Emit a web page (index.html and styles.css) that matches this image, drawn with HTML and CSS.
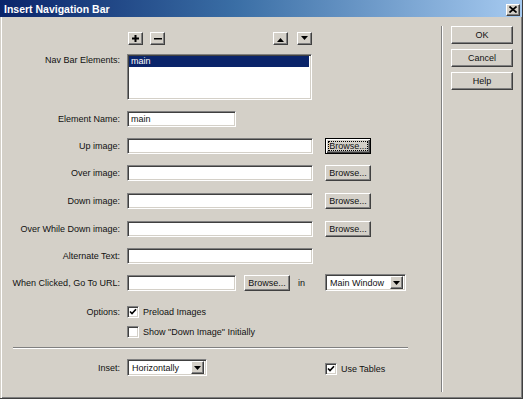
FILE: index.html
```html
<!DOCTYPE html>
<html>
<head>
<meta charset="utf-8">
<title>Insert Navigation Bar</title>
<link rel="stylesheet" href="styles.css">
</head>
<body>
<div class="window">
  <div class="titlebar">
    <span class="title">Insert Navigation Bar</span>
    <button class="btn close" aria-label="Close">
      <svg width="8" height="7" viewBox="0 0 8 7"><path d="M0.5 0.5 L7.5 6.5 M7.5 0.5 L0.5 6.5" stroke="#000" stroke-width="1.7" fill="none"/></svg>
    </button>
  </div>
  <div class="content">
    <div class="form">
      <div class="row toolbar-row">
        <span></span>
        <div class="toolbar">
          <div class="tgroup">
            <button class="btn tb" aria-label="Add"><svg width="7" height="7" viewBox="0 0 7 7"><rect x="0" y="2.5" width="7" height="2" fill="#000"/><rect x="2.5" y="0" width="2" height="7" fill="#000"/></svg></button>
            <button class="btn tb" aria-label="Remove"><svg width="8" height="2" viewBox="0 0 8 2"><rect x="0" y="0" width="8" height="1.5" fill="#000"/></svg></button>
          </div>
          <div class="tgroup right">
            <button class="btn tb up" aria-label="Move up"><svg width="7" height="4" viewBox="0 0 7 4"><polygon points="3.5,0 7,4 0,4" fill="#000"/></svg></button>
            <button class="btn tb down" aria-label="Move down"><svg width="7" height="4" viewBox="0 0 7 4"><polygon points="0,0 7,0 3.5,4" fill="#000"/></svg></button>
          </div>
        </div>
      </div>

      <div class="row list-row">
        <span class="lbl">Nav Bar Elements:</span>
        <div class="listbox sunken"><div class="item selected">main</div></div>
      </div>

      <div class="row field">
        <span class="lbl">Element Name:</span>
        <div class="cell"><input class="input short sunken" type="text" value="main"></div>
      </div>

      <div class="row field">
        <span class="lbl">Up image:</span>
        <div class="cell"><input class="input long sunken" type="text"><button class="btn browse focused"><span class="focus">Browse...</span></button></div>
      </div>

      <div class="row field">
        <span class="lbl">Over image:</span>
        <div class="cell"><input class="input long sunken" type="text"><button class="btn browse">Browse...</button></div>
      </div>

      <div class="row field lg">
        <span class="lbl">Down image:</span>
        <div class="cell"><input class="input long sunken" type="text"><button class="btn browse">Browse...</button></div>
      </div>

      <div class="row field lg">
        <span class="lbl">Over While Down image:</span>
        <div class="cell"><input class="input long sunken" type="text"><button class="btn browse">Browse...</button></div>
      </div>

      <div class="row field">
        <span class="lbl">Alternate Text:</span>
        <div class="cell"><input class="input long sunken" type="text"></div>
      </div>

      <div class="row field">
        <span class="lbl">When Clicked, Go To URL:</span>
        <div class="cell url">
          <input class="input short sunken" type="text">
          <button class="btn browse small-gap">Browse...</button>
          <span class="in">in</span>
          <div class="select sunken wide"><span class="sel-text">Main Window</span><span class="btn dd"><svg width="7" height="4" viewBox="0 0 7 4"><polygon points="0,0 7,0 3.5,4" fill="#000"/></svg></span></div>
        </div>
      </div>

      <div class="row opt first">
        <span class="lbl">Options:</span>
        <div class="cell"><span class="check"><span class="cb sunken"><svg width="8" height="8" viewBox="0 0 8 8"><polyline points="1,3.5 3,5.6 7,1.2" stroke="#000" stroke-width="1.6" fill="none"/></svg></span>Preload Images</span></div>
      </div>

      <div class="row opt second">
        <span></span>
        <div class="cell"><span class="check"><span class="cb sunken"></span>Show "Down Image" Initially</span></div>
      </div>

      <div class="hsep"></div>

      <div class="row inset-row">
        <span class="lbl">Inset:</span>
        <div class="cell">
          <div class="select sunken"><span class="sel-text">Horizontally</span><span class="btn dd"><svg width="7" height="4" viewBox="0 0 7 4"><polygon points="0,0 7,0 3.5,4" fill="#000"/></svg></span></div>
          <span class="check tables"><span class="cb sunken"><svg width="8" height="8" viewBox="0 0 8 8"><polyline points="1,3.5 3,5.6 7,1.2" stroke="#000" stroke-width="1.6" fill="none"/></svg></span>Use Tables</span>
        </div>
      </div>
    </div>

    <div class="vsep"></div>

    <div class="side">
      <button class="btn action">OK</button>
      <button class="btn action">Cancel</button>
      <button class="btn action">Help</button>
    </div>
  </div>
</div>
</body>
</html>
```

FILE: styles.css
```css
* { box-sizing: border-box; }

html, body {
  margin: 0;
  padding: 0;
  background: #d4d0c8;
}

body {
  font-family: "Liberation Sans", Arial, sans-serif;
  font-size: 9px;
  color: #111;
}

.window {
  width: 523px;
  height: 399px;
  display: flex;
  flex-direction: column;
  background: #d4d0c8;
  border-right: 1px solid #404040;
  border-bottom: 1px solid #404040;
  box-shadow: inset 1px 0 #d4d0c8, inset 2px 0 #fff, inset -1px -1px #808080;
}

.titlebar {
  height: 17px;
  flex: none;
  display: flex;
  align-items: center;
  justify-content: space-between;
  padding: 0 2px 0 4px;
  background: linear-gradient(to right, #0a246a 0%, #3a6ea5 45%, #a6caf0 100%);
}

.title {
  color: #fff;
  font-weight: bold;
  font-size: 10.5px;
}

.btn {
  appearance: none;
  margin: 0;
  padding: 0;
  font: inherit;
  color: #111;
  background: #d4d0c8;
  border: 1px solid;
  border-color: #fff #404040 #404040 #fff;
  box-shadow: inset -1px -1px #808080;
  display: flex;
  align-items: center;
  justify-content: center;
  white-space: nowrap;
}

.close {
  width: 14px;
  height: 12px;
  margin-top: 2px;
}

.content {
  flex: 1;
  display: flex;
}

.form {
  width: 441px;
  flex: none;
  padding-top: 15px;
  display: flex;
  flex-direction: column;
}

.vsep {
  width: 2px;
  border-left: 1px solid #808080;
  border-right: 1px solid #fff;
  margin: 9px 0 6px;
}

.side {
  padding: 9px 0 0 8px;
  display: flex;
  flex-direction: column;
  gap: 5px;
}

.action {
  width: 62px;
  height: 18px;
}

.row {
  display: grid;
  grid-template-columns: 120px 1fr;
  column-gap: 7px;
  align-items: center;
}

.lbl {
  text-align: right;
  white-space: nowrap;
}

.cell {
  display: flex;
  align-items: center;
}

/* toolbar */
.toolbar-row { height: 13px; }

.toolbar {
  width: 185px;
  display: flex;
  justify-content: space-between;
  padding-left: 1px;
}

.tgroup {
  display: flex;
  gap: 7px;
}

.tgroup.right { gap: 9px; }

.tb {
  width: 15px;
  height: 13px;
}

.tb.up svg { margin-top: 2px; }
.tb.down svg { margin-bottom: 1px; }

/* sunken fields */
.sunken {
  background: #fff;
  border: 1px solid;
  border-color: #808080 #fff #fff #808080;
  box-shadow: inset 1px 1px #404040, inset -1px -1px #d4d0c8;
}

.list-row {
  margin-top: 9px;
  align-items: start;
}

.list-row .lbl { padding-top: 1px; }

.listbox {
  width: 185px;
  height: 46px;
  padding: 1px 2px 2px 1px;
}

.item {
  height: 11px;
  line-height: 11px;
  padding-left: 2px;
}

.item.selected {
  background: #0a246a;
  color: #fff;
}

.field {
  height: 16px;
  margin-top: 11px;
}

.field.lg { margin-top: 12px; }

.input {
  height: 16px;
  padding: 0 3px;
  font: inherit;
  color: #111;
  outline: none;
}

.input.long { width: 186px; }
.input.short { width: 109px; }

.browse {
  width: 46px;
  height: 16px;
  margin-left: 12px;
}

.browse.small-gap { margin-left: 8px; }

.browse.focused {
  border-color: #000;
  box-shadow: inset 1px 1px #fff, inset -1px -1px #404040, inset -2px -2px #808080;
}

.focus {
  display: block;
  width: 40px;
  height: 10px;
  line-height: 8px;
  border: 1px dotted #000;
}

.url { align-items: flex-start; }

.in {
  width: 35px;
  padding-left: 8px;
  line-height: 16px;
}

.select {
  width: 80px;
  height: 17px;
  display: flex;
  align-items: center;
  justify-content: space-between;
  padding: 2px;
}

.select.wide {
  width: 81px;
  margin-top: -1px;
}

.sel-text { padding-left: 2px; }

.dd {
  width: 13px;
  height: 13px;
}

/* checkboxes */
.opt { height: 13px; }
.opt.first { margin-top: 14px; }
.opt.second { margin-top: 7px; }

.check {
  display: flex;
  align-items: center;
  gap: 4px;
}

.cb {
  width: 12px;
  height: 12px;
  display: flex;
  align-items: center;
  justify-content: center;
}

.hsep {
  margin: 9px 0 0 13px;
  width: 395px;
  height: 2px;
  border-top: 1px solid #808080;
  border-bottom: 1px solid #fff;
}

.inset-row {
  height: 17px;
  margin-top: 10px;
}

.tables {
  margin-left: 118px;
  margin-top: 2px;
}
```
